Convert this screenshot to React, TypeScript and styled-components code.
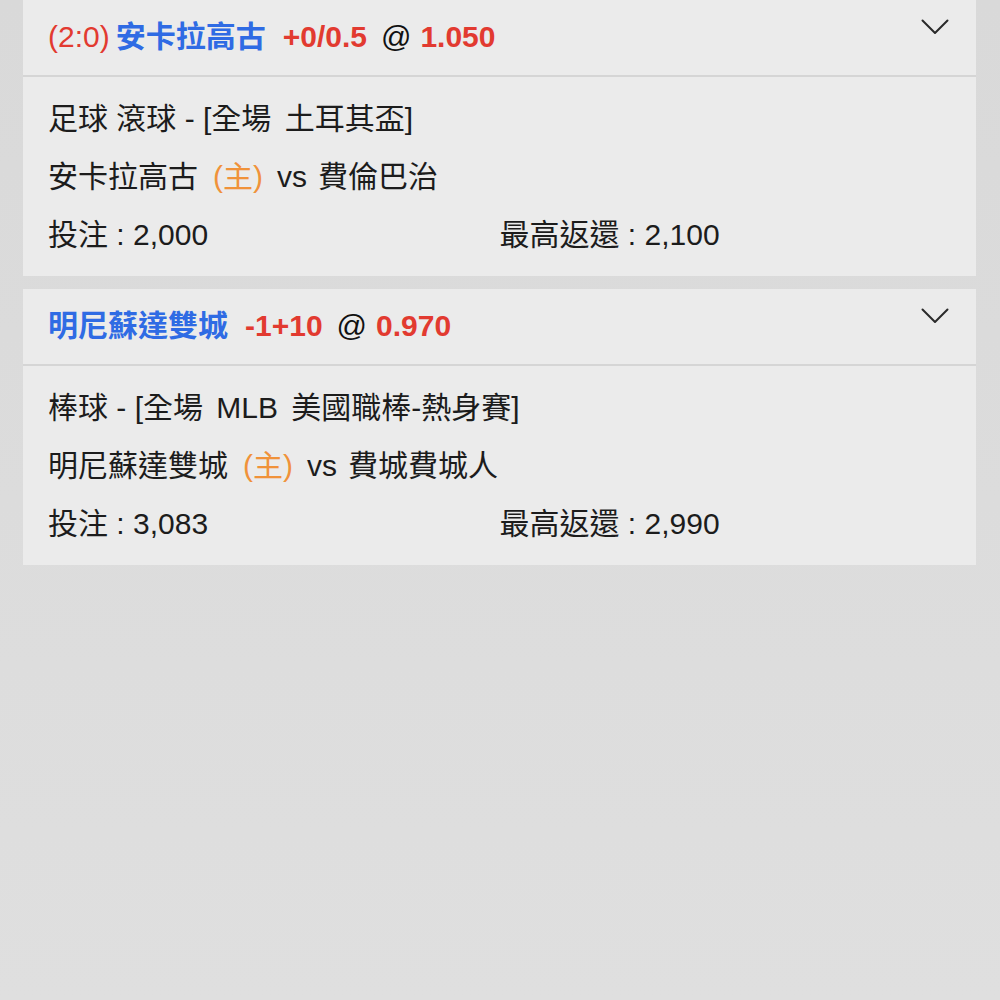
import styled, { createGlobalStyle } from "styled-components";

const GlobalStyle = createGlobalStyle`
  html, body {
    margin: 0;
    padding: 0;
    background: #dbdbdb;
  }
  body {
    font-family: "Liberation Sans", "Noto Sans CJK TC", sans-serif;
    color: #1c1c1c;
  }
`;

const Page = styled.main`
  width: 1000px;
  min-height: 1000px;
  box-sizing: border-box;
  padding: 0 24px 0 23px;
  display: flex;
  flex-direction: column;
  gap: 13px;
  background: linear-gradient(#d9d9d9, #dfdfdf);
`;

const Card = styled.section`
  background: #ebebeb;
  display: flex;
  flex-direction: column;
`;

const Header = styled.div`
  height: 77px;
  box-sizing: border-box;
  padding: 0 27px 8px 25px;
  display: flex;
  align-items: center;
  justify-content: space-between;
  border-bottom: 2px solid #d5d5d5;
  font-size: 30px;
`;

const Title = styled.div`
  white-space: pre;
`;

const Score = styled.span`
  color: #e23a30;
  margin-right: 6px;
`;

const Team = styled.span`
  color: #2f6be4;
  font-weight: bold;
`;

const Odds = styled.span<{ $gap?: number }>`
  color: #e23a30;
  font-weight: bold;
  margin-left: ${(p) => p.$gap ?? 0}px;
`;

const At = styled.span`
  color: #111;
  margin: 0 9px 0 14px;
`;

const Chevron = styled.svg`
  width: 28px;
  height: 16px;
  margin-bottom: 14px;
`;

const Body = styled.div`
  padding: 13px 25px 12px;
  font-size: 30px;
`;

const Line = styled.div`
  height: 58px;
  line-height: 58px;
  white-space: pre;
`;

const Market = styled.span`
  word-spacing: 5px;
`;

const Home = styled.span`
  color: #f0923a;
  margin: 0 14px 0 15px;
`;

const Away = styled.span`
  margin-left: 11px;
`;

const Amounts = styled.div`
  height: 58px;
  line-height: 58px;
  display: grid;
  grid-template-columns: 1fr 1fr;
`;

type Bet = {
  score?: string;
  team: string;
  handicap: string;
  price: string;
  sport: string;
  market: string;
  away: string;
  stake: string;
  payout: string;
};

const bets: Bet[] = [
  {
    score: "(2:0)",
    team: "安卡拉高古",
    handicap: "+0/0.5",
    price: "1.050",
    sport: "足球 滾球 - ",
    market: "[全場 土耳其盃]",
    away: "費倫巴治",
    stake: "2,000",
    payout: "2,100",
  },
  {
    team: "明尼蘇達雙城",
    handicap: "-1+10",
    price: "0.970",
    sport: "棒球 - ",
    market: "[全場 MLB 美國職棒-熱身賽]",
    away: "費城費城人",
    stake: "3,083",
    payout: "2,990",
  },
];

const BetCard = ({ bet }: { bet: Bet }) => (
  <Card>
    <Header>
      <Title>
        {bet.score && <Score>{bet.score}</Score>}
        <Team>{bet.team}</Team>
        <Odds $gap={17}>{bet.handicap}</Odds>
        <At>@</At>
        <Odds>{bet.price}</Odds>
      </Title>
      <Chevron viewBox="0 0 28 16" fill="none">
        <path d="M1.5 1.5L14 14L26.5 1.5" stroke="#2a2a2a" strokeWidth="2" strokeLinecap="round" strokeLinejoin="round" />
      </Chevron>
    </Header>
    <Body>
      <Line>
        {bet.sport}
        <Market>{bet.market}</Market>
      </Line>
      <Line>
        {bet.team}
        <Home>(主)</Home>vs<Away>{bet.away}</Away>
      </Line>
      <Amounts>
        <span>投注 : {bet.stake}</span>
        <span>最高返還 : {bet.payout}</span>
      </Amounts>
    </Body>
  </Card>
);

const App = () => {
  return (
    <>
      <GlobalStyle />
      <Page>
        {bets.map((bet) => (
          <BetCard key={bet.team} bet={bet} />
        ))}
      </Page>
    </>
  );
};

export default App;
